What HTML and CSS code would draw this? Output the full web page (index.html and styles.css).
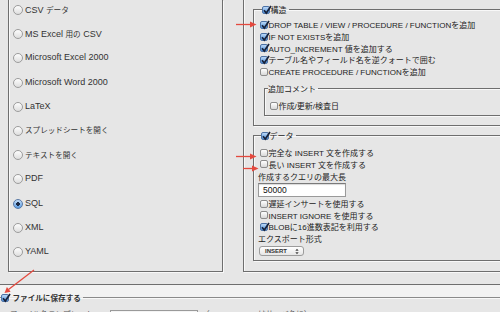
FILE: index.html
```html
<!DOCTYPE html>
<html lang="ja">
<head>
<meta charset="utf-8">
<title>エクスポート</title>
<link rel="stylesheet" href="styles.css">
</head>
<body>
<div class="top">
  <div class="panel left">
    <ul class="radios">
      <li><span class="rd"></span><span>CSV <span class="j">データ</span></span></li>
      <li><span class="rd"></span><span>MS Excel <span class="j">用の</span> CSV</span></li>
      <li><span class="rd"></span><span>Microsoft Excel 2000</span></li>
      <li><span class="rd"></span><span>Microsoft Word 2000</span></li>
      <li><span class="rd"></span><span>LaTeX</span></li>
      <li><span class="rd"></span><span class="j">スプレッドシートを開く</span></li>
      <li><span class="rd"></span><span class="j">テキストを開く</span></li>
      <li><span class="rd"></span><span>PDF</span></li>
      <li><span class="rd on"></span><span>SQL</span></li>
      <li><span class="rd"></span><span>XML</span></li>
      <li><span class="rd"></span><span>YAML</span></li>
    </ul>
  </div>
  <div class="panel right">
    <fieldset class="fs struct">
      <legend><span class="cb on"><svg viewBox="0 0 10 10"><path d="M2 5.2 L4.3 8 L9 1"/></svg></span><span>構造</span></legend>
      <div class="rows">
        <div class="row"><span class="cb on"><svg viewBox="0 0 10 10"><path d="M2 5.2 L4.3 8 L9 1"/></svg></span><span>DROP TABLE / VIEW / PROCEDURE / FUNCTIONを追加</span></div>
        <div class="row"><span class="cb on"><svg viewBox="0 0 10 10"><path d="M2 5.2 L4.3 8 L9 1"/></svg></span><span>IF NOT EXISTSを追加</span></div>
        <div class="row"><span class="cb on"><svg viewBox="0 0 10 10"><path d="M2 5.2 L4.3 8 L9 1"/></svg></span><span>AUTO_INCREMENT 値を追加する</span></div>
        <div class="row"><span class="cb on"><svg viewBox="0 0 10 10"><path d="M2 5.2 L4.3 8 L9 1"/></svg></span><span>テーブル名やフィールド名を逆クォートで囲む</span></div>
        <div class="row"><span class="cb"></span><span>CREATE PROCEDURE / FUNCTIONを追加</span></div>
      </div>
      <fieldset class="fs comment">
        <legend><span>追加コメント</span></legend>
        <div class="inner">
          <div class="row"><span class="cb"></span><span>作成/更新/検査日</span></div>
        </div>
      </fieldset>
    </fieldset>
    <fieldset class="fs data">
      <legend><span class="cb on"><svg viewBox="0 0 10 10"><path d="M2 5.2 L4.3 8 L9 1"/></svg></span><span>データ</span></legend>
      <div class="inner">
        <div class="row ind"><span class="cb"></span><span>完全な INSERT 文を作成する</span></div>
        <div class="row ind"><span class="cb"></span><span>長い INSERT 文を作成する</span></div>
        <div class="row"><span>作成するクエリの最大長</span></div>
        <div class="num">50000</div>
        <div class="row ind"><span class="cb"></span><span>遅延インサートを使用する</span></div>
        <div class="row ind"><span class="cb"></span><span>INSERT IGNORE を使用する</span></div>
        <div class="row ind"><span class="cb on"><svg viewBox="0 0 10 10"><path d="M2 5.2 L4.3 8 L9 1"/></svg></span><span>BLOBに16進数表記を利用する</span></div>
        <div class="row"><span>エクスポート形式</span></div>
        <div class="select"><span>INSERT</span><svg viewBox="0 0 6 10"><path d="M3 1 L5.5 4 L0.5 4 Z M3 9 L5.5 6 L0.5 6 Z"/></svg></div>
      </div>
    </fieldset>
  </div>
</div>
<div class="band"></div>
<fieldset class="fs save">
  <legend><span class="cb on"><svg viewBox="0 0 10 10"><path d="M2 5.2 L4.3 8 L9 1"/></svg></span><span>ファイルに保存する</span></legend>
  <div class="saverow">
    <span class="faint">ファイル名テンプレート:</span>
    <span class="info">(i)</span>
    <span class="tpl"></span>
    <span class="faint">（@SERVER@ はサーバ名に）</span>
  </div>
</fieldset>
<svg class="arrows" viewBox="0 0 500 312">
  <g stroke="#e4493e" stroke-width="1.3" fill="#e4493e">
    <line x1="236" y1="24.5" x2="251" y2="24.5"/>
    <polygon stroke="none" points="250,21.5 256.5,24.5 250,27.5"/>
    <line x1="236" y1="156.5" x2="251" y2="156.5"/>
    <polygon stroke="none" points="250,153.5 256.5,156.5 250,159.5"/>
    <line x1="243" y1="168.5" x2="253" y2="168.5"/>
    <polygon stroke="none" points="252,165.5 258.5,168.5 252,171.5"/>
    <line x1="34" y1="270" x2="8.5" y2="289.5"/>
    <polygon stroke="none" points="4.5,293 6.9,286.9 10.6,291.7"/>
  </g>
</svg>
</body>
</html>
```
FILE: styles.css
```css
body {
  margin: 0;
  width: 500px;
  height: 312px;
  overflow: hidden;
  position: relative;
  background: #e6e6e6;
  font-family: "Liberation Sans", "Noto Sans CJK JP", sans-serif;
  color: #222;
}

.top {
  display: flex;
  align-items: flex-start;
  height: 284px;
}

.panel {
  flex: none;
  box-sizing: border-box;
  border: 1px solid #6e6e6e;
  border-top: none;
  box-shadow: 1px 1px 0 #f8f8f8, inset 1px 0 0 #f8f8f8;
}

.left {
  margin-left: 8px;
  width: 215px;
  height: 272px;
  font-size: 9px;
}

.radios {
  list-style: none;
  margin: 0;
  padding: 3px 0 0 4px;
  display: flex;
  flex-direction: column;
  gap: 12.2px;
}

.radios li {
  display: flex;
  align-items: center;
  gap: 2px;
  height: 12px;
  color: #333;
  white-space: nowrap;
}

.j {
  font-size: 7.6px;
}

.rd {
  flex: none;
  box-sizing: border-box;
  width: 10px;
  height: 10px;
  margin-top: 2px;
  border-radius: 50%;
  border: 1px solid #9c9c9c;
  background: linear-gradient(#fdfdfd, #dedede);
}

.rd.on {
  border-color: #5878a4;
  background: radial-gradient(circle, #1d2b45 0 1.6px, transparent 2px), linear-gradient(#c4ddf7, #5d9de2);
}

.right {
  margin-left: 20px;
  width: 300px;
  height: 272px;
  padding-left: 9px;
  font-size: 8px;
}

.fs {
  margin: 0;
  padding: 0;
  min-width: 0;
  border: 1px solid #6e6e6e;
  box-shadow: inset 1px 1px 0 #f8f8f8, 1px 1px 0 #f8f8f8;
}

.fs legend {
  padding: 0 2px 0 0;
  height: 11px;
  display: flex;
  align-items: center;
  white-space: nowrap;
}

.struct {
  margin-top: 4px;
}

.struct > legend {
  margin-left: 8px;
}

.rows {
  padding: 4px 0 0 6px;
}

.row {
  display: flex;
  align-items: center;
  height: 11.7px;
  white-space: nowrap;
}

.cb {
  flex: none;
  position: relative;
  box-sizing: border-box;
  width: 8px;
  height: 8px;
  margin-right: 0.5px;
  border: 1px solid #8c8c8c;
  border-radius: 2px;
  background: linear-gradient(#ffffff, #d8d8d8);
}

.cb.on {
  border-color: #4c72a6;
  background: linear-gradient(#bcd8f6, #4d93df);
}

.cb svg {
  position: absolute;
  left: -1px;
  top: -2px;
  width: 10px;
  height: 10px;
  overflow: visible;
  fill: none;
  stroke: #18223a;
  stroke-width: 1.7;
}

.comment {
  margin: 6px 0 9px 10px;
}

.comment > legend {
  margin-left: 3px;
}

.comment .inner {
  padding: 5.6px 0 3px 5px;
}

.data {
  margin-top: 4.5px;
}

.data > legend {
  margin-left: 7px;
}

.data .inner {
  padding: 5.6px 0 4px 4px;
}

.row.ind {
  padding-left: 2px;
}

.num {
  box-sizing: border-box;
  width: 88px;
  height: 14px;
  margin: 0.8px 0 1px;
  padding-left: 4px;
  border: 1px solid #9a9a9a;
  border-top-color: #7a7a7a;
  background: #fff;
  box-shadow: inset 0 1px 1px rgba(0, 0, 0, 0.15);
  font-size: 8.5px;
  line-height: 12px;
  color: #111;
}

.select {
  box-sizing: border-box;
  width: 45px;
  height: 10px;
  margin: 2px 0 0 1px;
  padding: 0 4px 0 5px;
  display: flex;
  align-items: center;
  justify-content: space-between;
  border: 1px solid #9c9c9c;
  border-radius: 3px;
  background: linear-gradient(#ffffff, #e6e6e6);
  font-size: 6px;
  font-weight: bold;
  color: #333;
}

.select svg {
  width: 4px;
  height: 7px;
  fill: #444;
}

.band {
  box-sizing: border-box;
  height: 13px;
  border-top: 1px solid #6e6e6e;
  background: #f2f2f2;
}

.save {
  margin-top: -5px;
  width: 700px;
  border-left: none;
  border-color: #8a8a8a;
  box-shadow: inset 0 1px 0 #f8f8f8;
}

.save > legend {
  margin-left: 1px;
  gap: 3px;
  font-size: 7.6px;
  font-weight: bold;
  color: #333;
}

.saverow {
  display: flex;
  align-items: flex-start;
  gap: 4px;
  padding: 6px 0 0 10px;
  font-size: 7.6px;
  line-height: 11px;
  color: #555;
  white-space: nowrap;
}

.info {
  font-size: 7px;
  font-weight: bold;
}

.tpl {
  width: 88px;
  height: 12px;
  margin-top: 1px;
  box-sizing: border-box;
  border: 1px solid #9a9a9a;
  background: #f4f4f4;
}

.arrows {
  position: absolute;
  left: 0;
  top: 0;
  width: 500px;
  height: 312px;
  pointer-events: none;
}
```
